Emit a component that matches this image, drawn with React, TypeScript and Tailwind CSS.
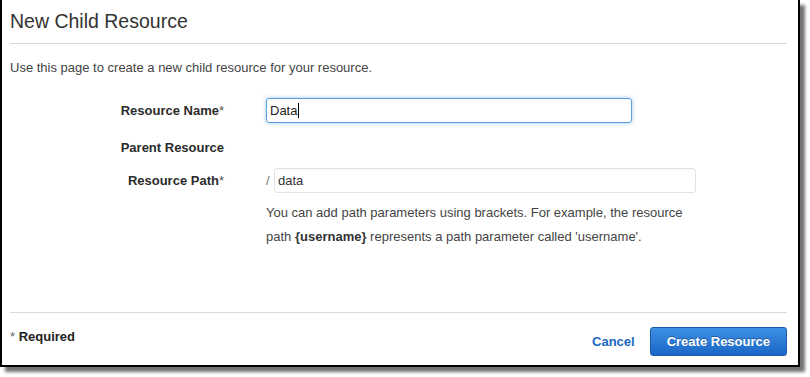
import React from 'react';

const font = "font-['Liberation_Sans',Arial,sans-serif]";

function FormRow({ label, required, children }: { label: string; required?: boolean; children?: React.ReactNode }) {
  return (
    <div className="flex items-center">
      <div className="w-[214px] shrink-0 text-right text-[13px] font-bold leading-[15px] text-[#2b2b2b]">
        {label}
        {required && <span className="font-normal text-[#555]">*</span>}
      </div>
      <div className="ml-[42px] flex items-center">{children}</div>
    </div>
  );
}

export default function App() {
  return (
    <div className={`w-[810px] h-[377px] bg-white ${font}`}>
      <div className="flex h-[367px] w-[800px] flex-col border-x-2 border-b-2 border-black bg-white shadow-[5px_5px_3px_rgba(0,0,0,0.55)]">
        <div className="flex flex-1 flex-col pl-[8px] pr-[11px]">
          <h1 className="pt-[10px] text-[19.5px] font-normal leading-[23px] text-[#333]">New Child Resource</h1>
          <div className="mt-[10px] h-px bg-[#d9d9d9]" />
          <p className="mt-[16px] text-[13px] leading-[15px] text-[#444]">
            Use this page to create a new child resource for your resource.
          </p>

          <div className="mt-[23px]">
            <FormRow label="Resource Name" required>
              <div className="flex h-[25px] w-[366px] items-center rounded-[3px] border border-[#5b9fe0] px-[3px] text-[13px] text-[#222] shadow-[0_0_4px_rgba(91,159,224,0.6)]">
                Data
                <span className="ml-px inline-block h-[15px] w-px bg-black" />
              </div>
            </FormRow>
          </div>

          <div className="mt-[17px]">
            <FormRow label="Parent Resource" />
          </div>

          <div className="mt-[13px]">
            <FormRow label="Resource Path" required>
              <span className="w-[8px] text-[13px] leading-[15px] text-[#777]">/</span>
              <div className="flex h-[25px] w-[422px] items-center rounded-[3px] border border-[#e2e2e2] px-[3px] text-[13px] text-[#333] shadow-[inset_0_1px_1px_rgba(0,0,0,0.03)]">
                data
              </div>
            </FormRow>
          </div>

          <p className="ml-[256px] mt-[8px] w-[430px] text-[13px] leading-[24px] text-[#444]">
            You can add path parameters using brackets. For example, the resource path{' '}
            <span className="font-bold text-[#333]">{'{username}'}</span> represents a path parameter called 'username'.
          </p>
        </div>

        <div className="ml-[8px] mr-[11px] h-px bg-[#d9d9d9]" />

        <div className="flex h-[52px] items-start justify-between pl-[8px] pr-[11px] pt-[14px]">
          <div className="mt-[2px] text-[13px] leading-[15px] text-[#222]">
            <span className="text-[#666]">*</span> <span className="font-bold">Required</span>
          </div>
          <div className="flex items-center gap-[15px]">
            <button className="text-[13px] font-bold leading-[15px] text-[#1b67c3]">Cancel</button>
            <button className="h-[29px] rounded-[3px] border border-[#1b5cad] bg-gradient-to-b from-[#3d90e4] to-[#1b66c7] px-[16px] text-[13px] font-bold leading-[15px] text-white [text-shadow:0_-1px_0_rgba(0,0,0,0.3)]">
              Create Resource
            </button>
          </div>
        </div>
      </div>
    </div>
  );
}
